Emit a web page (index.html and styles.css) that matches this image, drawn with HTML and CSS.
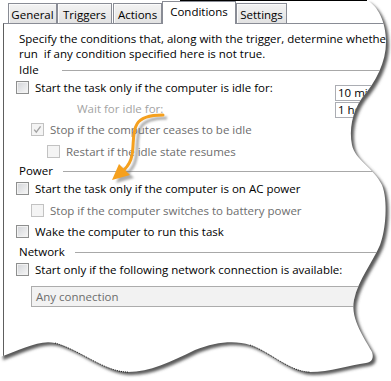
FILE: index.html
```html
<!DOCTYPE html>
<html lang="en">

<head>
    <meta charset="UTF-8">
    <meta name="viewport" content="width=device-width, initial-scale=1.0">
    <title>Conditions</title>
    <link rel="stylesheet" href="styles.css">
</head>

<body>
    <div class="window">
        <div class="tabs">
            <div class="tab tab-general">General</div>
            <div class="tab tab-triggers">Triggers</div>
            <div class="tab tab-actions">Actions</div>
            <div class="tab tab-conditions active">Conditions</div>
            <div class="tab tab-settings">Settings</div>
        </div>
        <div class="panel">
            <p class="intro">Specify the conditions that, along with the trigger, determine whether the task should<br>run&nbsp; if any condition specified here is not true.</p>

            <div class="group"><span>Idle</span></div>
            <div class="row">
                <span class="cb"></span>Start the task only if the computer is idle for:
                <span class="field first">10 minutes</span>
            </div>
            <div class="row">
                <span class="wait">Wait for idle for:</span>
                <span class="field second">1 hour</span>
            </div>
            <div class="row sub muted">
                <span class="cb off">
                    <svg width="11" height="11" viewBox="0 0 11 11"><path d="M2.2 5.6 L4.3 8.2 L8.6 2.4" fill="none" stroke="#a2a2a2" stroke-width="1.4"/></svg>
                </span>Stop if the computer ceases to be idle
            </div>
            <div class="row subsub muted gap">
                <span class="cb off"></span>Restart if the idle state resumes
            </div>

            <div class="group power"><span>Power</span></div>
            <div class="row">
                <span class="cb"></span>Start the task only if the computer is on AC power
            </div>
            <div class="row sub muted gap">
                <span class="cb off"></span>Stop if the computer switches to battery power
            </div>
            <div class="row">
                <span class="cb"></span>Wake the computer to run this task
            </div>

            <div class="group network"><span>Network</span></div>
            <div class="row">
                <span class="cb"></span>Start only if the following network connection is available:
            </div>
            <div class="select">Any connection</div>
        </div>
    </div>

    <svg class="overlay" width="391" height="381" viewBox="0 0 391 381">
        <defs>
            <filter id="blur" x="-5%" y="-5%" width="110%" height="110%">
                <feGaussianBlur stdDeviation="1.6"/>
            </filter>
            <filter id="soft" x="-30%" y="-30%" width="160%" height="160%">
                <feGaussianBlur stdDeviation="1.3"/>
            </filter>
            <clipPath id="outside">
                <path clip-rule="evenodd" d="M0,0 H391 V381 H0 Z M0,0 H367 C378,6 386,22 386,42 C386,62 376,82 362,98 C352,112 349,130 352,145 C355,160 374,168 382,185 C388,200 386,230 380,245 C374,260 358,280 354,300 C350,320 366,340 372,352 C374,358 372,362 366,363 C350,365 330,372 310,372 C290,372 270,352 250,345 C235,340 215,342 195,350 C170,362 150,372 128,372 C105,372 80,350 55,343 C40,339 20,350 0,357 Z"/>
            </clipPath>
        </defs>

        <!-- arrow -->
        <g transform="translate(4,3)" filter="url(#soft)" opacity="0.55">
            <path d="M163,115 C152,115 141,117 137,124 C132,132 134,146 132,155 C131,161 128,166 124,170" fill="none" stroke="#6a6a6a" stroke-width="3"/>
            <polygon points="112,180 119,164 130,175" fill="#6a6a6a"/>
        </g>
        <path d="M163,115 C152,115 141,117 137,124 C132,132 134,146 132,155 C131,161 128,166 124,170" fill="none" stroke="#f5a01e" stroke-width="3" stroke-linecap="round"/>
        <polygon points="112,180 119,164 130,175" fill="#f5a01e"/>

        <!-- torn edge -->
        <path fill="#fff" fill-rule="evenodd" d="M0,0 H391 V381 H0 Z M0,0 H367 C378,6 386,22 386,42 C386,62 376,82 362,98 C352,112 349,130 352,145 C355,160 374,168 382,185 C388,200 386,230 380,245 C374,260 358,280 354,300 C350,320 366,340 372,352 C374,358 372,362 366,363 C350,365 330,372 310,372 C290,372 270,352 250,345 C235,340 215,342 195,350 C170,362 150,372 128,372 C105,372 80,350 55,343 C40,339 20,350 0,357 Z"/>
        <g clip-path="url(#outside)">
            <path fill="#5a5a5a" transform="translate(3,3)" filter="url(#blur)" d="M0,0 H367 C378,6 386,22 386,42 C386,62 376,82 362,98 C352,112 349,130 352,145 C355,160 374,168 382,185 C388,200 386,230 380,245 C374,260 358,280 354,300 C350,320 366,340 372,352 C374,358 372,362 366,363 C350,365 330,372 310,372 C290,372 270,352 250,345 C235,340 215,342 195,350 C170,362 150,372 128,372 C105,372 80,350 55,343 C40,339 20,350 0,357 Z"/>
        </g>
        <path d="M55,343 C80,350 105,372 128,372 M250,345 C270,352 290,372 310,372" fill="none" stroke="#000" stroke-width="0.8" stroke-dasharray="1 1"/>
        <rect x="180" y="0" width="187" height="1" fill="#000"/>
    </svg>
</body>

</html>
```

FILE: styles.css
```css
html,
body {
    margin: 0;
}

body {
    position: relative;
    width: 391px;
    height: 381px;
    overflow: hidden;
    background-color: #fff;
    font-family: "Open Sans", "Noto Sans", sans-serif;
    font-size: 11.5px;
    color: #000;
}

.window {
    width: 440px;
}

.tabs {
    display: flex;
    align-items: flex-end;
    height: 23px;
    padding-left: 8px;
}

.tab {
    box-sizing: border-box;
    height: 20px;
    padding-top: 3px;
    line-height: 16px;
    text-align: center;
    border: 1px solid #898c95;
    border-bottom: 0;
    background: linear-gradient(#f3f3f3, #e2e2e2);
    box-shadow: inset 1px 1px 0 #fbfbfb;
    white-space: nowrap;
}

.tab-general {
    width: 49px;
}

.tab-triggers {
    width: 55px;
    margin-right: 1px;
}

.tab-actions {
    width: 49px;
}

.tab-conditions {
    width: 74px;
}

.tab-settings {
    width: 51px;
}

.tab.active {
    position: relative;
    z-index: 1;
    height: 23px;
    margin-bottom: -1px;
    padding-top: 2px;
    background: #fff;
    box-shadow: none;
}

.panel {
    height: 340px;
    margin-left: 3px;
    padding: 7px 15px 0 12px;
    border-top: 1px solid #898c95;
    border-left: 1px solid #5e5e5e;
}

.intro {
    margin: 0 0 0 3px;
    line-height: 15px;
    white-space: nowrap;
}

.group {
    display: flex;
    align-items: center;
    margin: 1px 0 0 3px;
    line-height: 15px;
}

.group>span {
    min-width: 33px;
    margin-right: 10px;
}

.group::after {
    content: "";
    flex: 1;
    margin-top: 2px;
    border-top: 1px solid #a8a8a8;
}

.group.network {
    margin-top: 2px;
}

.row {
    display: flex;
    align-items: center;
    height: 21px;
    line-height: 21px;
    white-space: nowrap;
}

.row.sub {
    padding-left: 15px;
}

.row.subsub {
    padding-left: 31px;
}

.row.gap {
    margin-top: 1px;
}

.row.muted {
    color: #6d6d6d;
}

.cb {
    flex: none;
    box-sizing: border-box;
    width: 13px;
    height: 13px;
    margin-right: 6px;
    border: 1px solid #8e8f8f;
    background: linear-gradient(135deg, #d2d4d8, #f7f7f7);
    box-shadow: inset 0 0 0 1px #f2f2f2;
}

.cb.off {
    border-color: #c2c2c2;
    background: #f4f4f4;
    box-shadow: none;
}

.cb svg {
    display: block;
}

.wait {
    margin-left: 61px;
    color: #a3a3a3;
}

.field {
    align-self: flex-start;
    box-sizing: border-box;
    width: 90px;
    height: 16px;
    margin-left: auto;
    padding-left: 2px;
    border: 1px solid #abadb3;
    background-color: #fff;
    line-height: 14px;
    color: #000;
}

.field.first {
    margin-top: 8px;
}

.field.second {
    margin-top: 4px;
}

.select {
    box-sizing: border-box;
    height: 21px;
    margin: 6px 0 0 15px;
    padding-left: 4px;
    border: 1px solid #acacac;
    background-color: #f2f2f2;
    line-height: 19px;
    color: #6d6d6d;
}

.overlay {
    position: absolute;
    top: 0;
    left: 0;
    pointer-events: none;
}
```
